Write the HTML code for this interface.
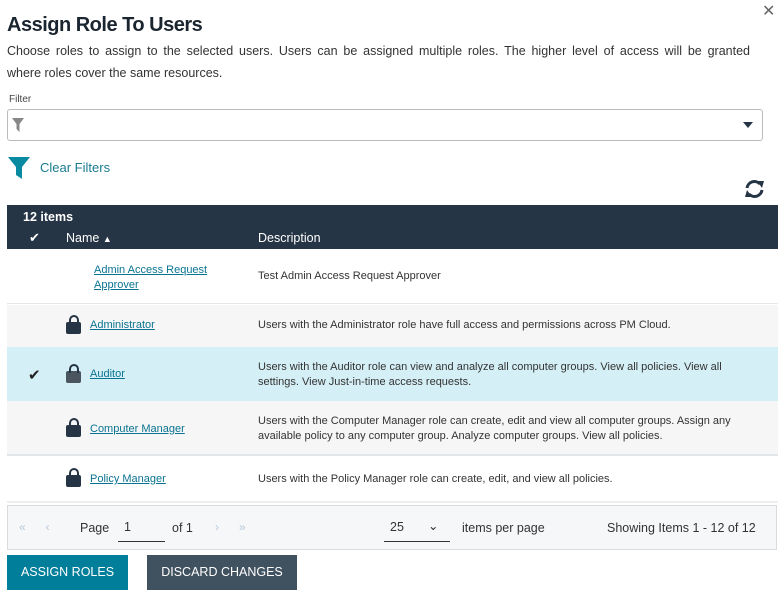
<!DOCTYPE html>
<html><head><style>
*{margin:0;padding:0;box-sizing:border-box}
body{width:778px;height:595px;background:#fff;font-family:"Liberation Sans",sans-serif;color:#222;position:relative;overflow:hidden}
.a{position:absolute}
.lnk{color:#0a7391;text-decoration:underline;font-size:11px}
.desc{font-size:11px;color:#333;line-height:15px}
.lock{position:absolute;width:15px;height:12px;background:#263545;border-radius:2px}
.lock:before{content:"";position:absolute;left:2.5px;top:-7px;width:6px;height:7px;border:2.5px solid #263545;border-bottom:none;border-radius:5px 5px 0 0}
</style></head><body>
<div class="a" style="left:762px;top:1px;font-size:16px;color:#666">✕</div>
<div class="a" style="left:7px;top:14px;font-size:20px;font-weight:bold;color:#1b2530;letter-spacing:-0.5px">Assign Role To Users</div>
<div class="a" style="left:7px;top:40px;width:743px;font-size:12.5px;line-height:22px;color:#333;text-align:justify;text-align-last:justify">Choose roles to assign to the selected users. Users can be assigned multiple roles. The higher level of access will be granted</div>
<div class="a" style="left:7px;top:62px;font-size:12.5px;line-height:22px;color:#333">where roles cover the same resources.</div>
<div class="a" style="left:9px;top:94px;font-size:10px;color:#444">Filter</div>
<div class="a" style="left:7px;top:109px;width:756px;height:32px;border:1px solid #bbb;border-radius:3px"></div>
<svg class="a" style="left:12px;top:118px" width="12" height="14" viewBox="0 0 12 14"><path d="M0 0H12L7.5 6V14L4.5 11V6Z" fill="#888"/></svg>
<svg class="a" style="left:743px;top:122px" width="10" height="6"><path d="M0 0H10L5 6Z" fill="#263545"/></svg>
<svg class="a" style="left:8px;top:157px" width="22" height="22" viewBox="0 0 22 22"><path d="M0 0H22L14 10V22L8 18V10Z" fill="#0a8aa0"/></svg>
<div class="a" style="left:40px;top:160px;font-size:13px;color:#1b7b91">Clear Filters</div>
<svg class="a" style="left:744px;top:180px" width="21" height="18" viewBox="0 0 21 18"><path d="M3 8A7.5 7.5 0 0 1 16 4" stroke="#263545" stroke-width="3" fill="none"/><path d="M13 1L20 1L18 8Z" fill="#263545"/><path d="M18 10A7.5 7.5 0 0 1 5 14" stroke="#263545" stroke-width="3" fill="none"/><path d="M8 17L1 17L3 10Z" fill="#263545"/></svg>
<div class="a" style="left:7px;top:205px;width:771px;height:44px;background:#263545;color:#fff">
<div class="a" style="left:16px;top:5px;font-size:12.5px;font-weight:bold">12 items</div>
<div class="a" style="left:22px;top:25px;font-size:13px">✔</div>
<div class="a" style="left:59px;top:26px;font-size:12.5px">Name <span style="font-size:9px">▲</span></div>
<div class="a" style="left:251px;top:26px;font-size:12.5px">Description</div>
</div>
<div class="a" style="left:7px;top:249px;width:771px;height:55px;background:#fff;border-bottom:1px solid #e6e6e6"></div>
<div class="a lnk" style="left:94px;top:263px;line-height:15px">Admin Access Request<br>Approver</div>
<div class="a desc" style="left:258px;top:269px">Test Admin Access Request Approver</div>
<div class="a" style="left:7px;top:305px;width:771px;height:42px;background:#f6f6f6"></div>
<div class="lock" style="left:66px;top:322px"></div>
<div class="a lnk" style="left:90px;top:319px">Administrator</div>
<div class="a desc" style="left:258px;top:318px">Users with the Administrator role have full access and permissions across PM Cloud.</div>
<div class="a" style="left:7px;top:347px;width:771px;height:54px;background:#d4eff5"></div>
<div class="a" style="left:28px;top:366px;font-size:15px;color:#222">✔</div>
<div class="lock" style="left:66px;top:371px;background:#4a5560"></div>
<div class="a lnk" style="left:90px;top:368px">Auditor</div>
<div class="a desc" style="left:258px;top:360px">Users with the Auditor role can view and analyze all computer groups. View all policies. View all<br>settings. View Just-in-time access requests.</div>
<div class="a" style="left:7px;top:401px;width:771px;height:55px;background:#f6f6f6;border-bottom:2px solid #e3e6e8"></div>
<div class="lock" style="left:66px;top:425px"></div>
<div class="a lnk" style="left:90px;top:423px">Computer Manager</div>
<div class="a desc" style="left:258px;top:414px">Users with the Computer Manager role can create, edit and view all computer groups. Assign any<br>available policy to any computer group. Analyze computer groups. View all policies.</div>
<div class="lock" style="left:66px;top:475px"></div>
<div class="a lnk" style="left:90px;top:473px">Policy Manager</div>
<div class="a desc" style="left:258px;top:472px">Users with the Policy Manager role can create, edit, and view all policies.</div>
<div class="a" style="left:7px;top:501px;width:771px;height:2px;background:#eee"></div>
<div class="a" style="left:7px;top:505px;width:770px;height:45px;background:#f5f7f8;border:1px solid #d8dcdf;font-size:12.5px;color:#333">
<div class="a" style="left:11px;top:14px;color:#b8c8d8;font-size:12px">«&nbsp;&nbsp;&nbsp;&nbsp;&nbsp;&nbsp;‹</div>
<div class="a" style="left:72px;top:15px">Page</div>
<div class="a" style="left:110px;top:14px;width:47px;height:22px;border-bottom:1px solid #333;padding-left:6px">1</div>
<div class="a" style="left:164px;top:15px">of 1</div>
<div class="a" style="left:207px;top:14px;color:#b8c8d8;font-size:12px">›&nbsp;&nbsp;&nbsp;&nbsp;&nbsp;&nbsp;»</div>
<div class="a" style="left:376px;top:14px;width:66px;height:22px;border-bottom:1px solid #333;padding-left:6px">25 <span style="position:absolute;left:44px;top:-2px">⌄</span></div>
<div class="a" style="left:454px;top:15px">items per page</div>
<div class="a" style="left:599px;top:15px">Showing Items 1 - 12 of 12</div>
</div>
<div class="a" style="left:7px;top:555px;width:121px;height:35px;background:#017e9a;color:#fff;font-size:12.5px;text-align:center;line-height:35px">ASSIGN ROLES</div>
<div class="a" style="left:147px;top:555px;width:150px;height:35px;background:#40515f;color:#fff;font-size:12.5px;text-align:center;line-height:35px">DISCARD CHANGES</div>
</body></html>
